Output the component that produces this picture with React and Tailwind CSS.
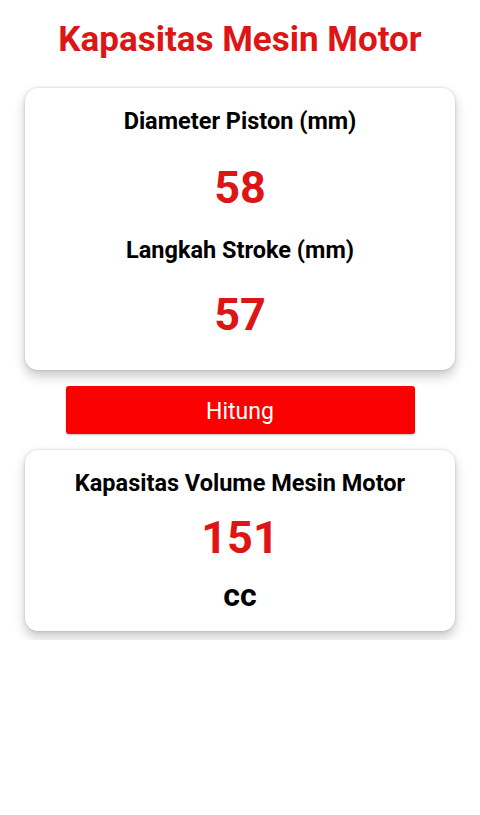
export default function App() {
  const font = { fontFamily: 'Roboto, "Noto Sans", sans-serif' };
  return (
    <div className="w-[480px] min-h-[815px] bg-white" style={font}>
      <div className="overflow-hidden pb-[9px]">
        <h1 className="pt-[20px] text-center text-[35px] leading-[40px] font-bold text-[#dd1515]">
          Kapasitas Mesin Motor
        </h1>
        <div className="mx-[25px] mt-[28px] rounded-[13px] bg-white pt-[19px] pb-[29px] shadow-[0_6px_12px_rgba(0,0,0,0.22),0_0_3px_rgba(0,0,0,0.18)] flex flex-col items-center">
          <div className="text-[23.5px] leading-[28px] font-bold text-black">Diameter Piston (mm)</div>
          <div className="mt-[27px] text-[45px] leading-[52px] font-bold text-[#dd1515]">58</div>
          <div className="mt-[22px] text-[23.5px] leading-[28px] font-bold text-black">Langkah Stroke (mm)</div>
          <div className="mt-[25px] text-[45px] leading-[52px] font-bold text-[#dd1515]">57</div>
        </div>
        <div className="mt-[16px] flex justify-center">
          <button className="w-[349px] h-[48px] pt-[4px] rounded-[3px] bg-[#fb0000] text-white text-[23px] leading-[28px] shadow-[0_1px_2px_rgba(0,0,0,0.25)]">
            Hitung
          </button>
        </div>
        <div className="mx-[25px] mt-[16px] rounded-[13px] bg-white pt-[19px] pb-[19px] shadow-[0_6px_12px_rgba(0,0,0,0.22),0_0_3px_rgba(0,0,0,0.18)] flex flex-col items-center">
          <div className="text-[23.5px] leading-[28px] font-bold text-black">Kapasitas Volume Mesin Motor</div>
          <div className="mt-[15px] text-[45px] leading-[52px] font-bold text-[#dd1515]">151</div>
          <div className="mt-[14px] text-[32px] leading-[34px] font-bold text-black">cc</div>
        </div>
      </div>
    </div>
  );
}
